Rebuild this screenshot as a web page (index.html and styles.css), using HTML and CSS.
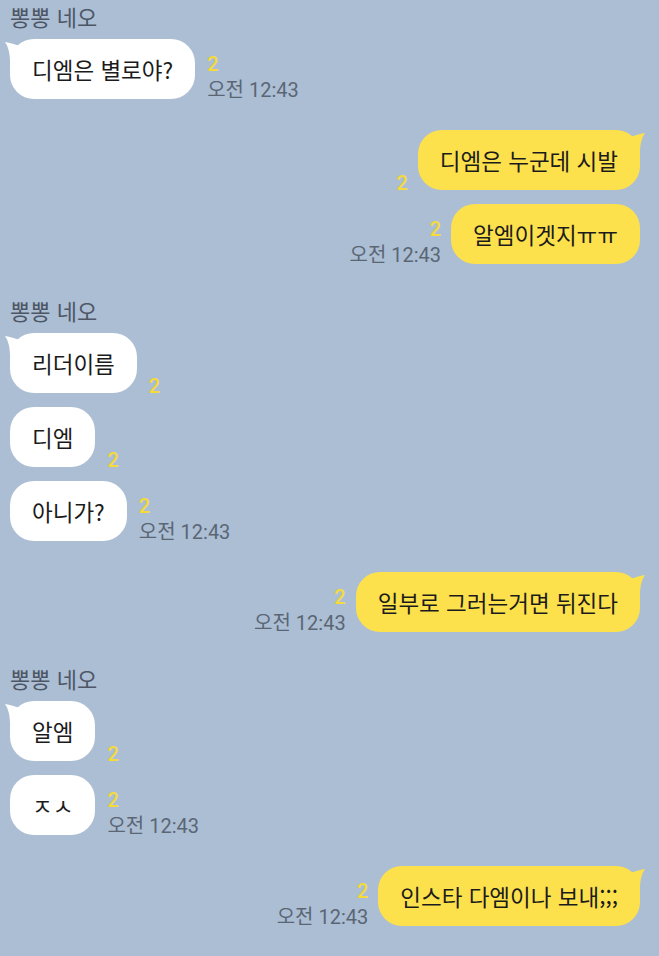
FILE: index.html
```html
<!DOCTYPE html>
<html lang="ko">
<head>
<meta charset="utf-8">
<title>채팅</title>
<link rel="stylesheet" href="styles.css">
</head>
<body>
<div class="chat">
  <div class="group in">
    <div class="name">뽕뽕 네오</div>
    <div class="row">
      <div class="bubble white first">디엠은 별로야?<svg class="tail" width="20" height="24" viewBox="0 0 20 24"><path d="M0 2 C5 3 10 4.5 16 6 L16 22 L5 22 C5 14 3.5 7 0 2 Z" fill="#fff"/></svg></div>
      <div class="meta"><span class="unread">2</span><span class="time">오전 12:43</span></div>
    </div>
  </div>

  <div class="group out">
    <div class="row">
      <div class="meta solo"><span class="unread">2</span></div>
      <div class="bubble yellow first">디엠은 누군데 시발<svg class="tail" width="20" height="24" viewBox="0 0 20 24"><path d="M20 2 C15 3 10 4.5 4 6 L4 22 L15 22 C15 14 16.5 7 20 2 Z" fill="#fde14c"/></svg></div>
    </div>
    <div class="row">
      <div class="meta"><span class="unread">2</span><span class="time">오전 12:43</span></div>
      <div class="bubble yellow">알엠이겟지ㅠㅠ</div>
    </div>
  </div>

  <div class="group in">
    <div class="name">뽕뽕 네오</div>
    <div class="row">
      <div class="bubble white first">리더이름<svg class="tail" width="20" height="24" viewBox="0 0 20 24"><path d="M0 2 C5 3 10 4.5 16 6 L16 22 L5 22 C5 14 3.5 7 0 2 Z" fill="#fff"/></svg></div>
      <div class="meta solo"><span class="unread">2</span></div>
    </div>
    <div class="row">
      <div class="bubble white">디엠</div>
      <div class="meta solo"><span class="unread">2</span></div>
    </div>
    <div class="row">
      <div class="bubble white">아니가?</div>
      <div class="meta"><span class="unread">2</span><span class="time">오전 12:43</span></div>
    </div>
  </div>

  <div class="group out">
    <div class="row">
      <div class="meta"><span class="unread">2</span><span class="time">오전 12:43</span></div>
      <div class="bubble yellow first">일부로 그러는거면 뒤진다<svg class="tail" width="20" height="24" viewBox="0 0 20 24"><path d="M20 2 C15 3 10 4.5 4 6 L4 22 L15 22 C15 14 16.5 7 20 2 Z" fill="#fde14c"/></svg></div>
    </div>
  </div>

  <div class="group in">
    <div class="name">뽕뽕 네오</div>
    <div class="row">
      <div class="bubble white first">알엠<svg class="tail" width="20" height="24" viewBox="0 0 20 24"><path d="M0 2 C5 3 10 4.5 16 6 L16 22 L5 22 C5 14 3.5 7 0 2 Z" fill="#fff"/></svg></div>
      <div class="meta solo"><span class="unread">2</span></div>
    </div>
    <div class="row">
      <div class="bubble white">ㅈㅅ</div>
      <div class="meta"><span class="unread">2</span><span class="time">오전 12:43</span></div>
    </div>
  </div>

  <div class="group out">
    <div class="row">
      <div class="meta"><span class="unread">2</span><span class="time">오전 12:43</span></div>
      <div class="bubble yellow first">인스타 다엠이나 보내;;;<svg class="tail" width="20" height="24" viewBox="0 0 20 24"><path d="M20 2 C15 3 10 4.5 4 6 L4 22 L15 22 C15 14 16.5 7 20 2 Z" fill="#fde14c"/></svg></div>
    </div>
  </div>
</div>
</body>
</html>
```

FILE: styles.css
```css
html, body {
  margin: 0;
  padding: 0;
}
body {
  background: #abbed4;
  font-family: "Noto Sans CJK KR", "Noto Sans", sans-serif;
  width: 659px;
  height: 956px;
  overflow: hidden;
}
.chat {
  display: flex;
  flex-direction: column;
  gap: 30.5px;
  padding: 0 19px 0 10px;
}
.group {
  display: flex;
  flex-direction: column;
}
.group.in { align-items: flex-start; }
.group.out { align-items: flex-end; }
.name {
  font-size: 22px;
  line-height: 32px;
  margin-bottom: 7px;
  color: #4d5664;
}
.row {
  display: flex;
  align-items: flex-end;
}
.row + .row { margin-top: 14px; }
.group.in .row { gap: 12px; }
.group.out .row { gap: 10px; }
.bubble {
  position: relative;
  height: 60px;
  box-sizing: border-box;
  padding: 0 22px;
  border-radius: 24px;
  display: flex;
  align-items: center;
  font-size: 22.5px;
  color: #1b1b1b;
  white-space: nowrap;
}
.bubble.white { background: #ffffff; }
.bubble.yellow { background: #fde14c; }
.tail {
  position: absolute;
  top: 1px;
}
.white .tail { left: -5px; }
.yellow .tail { right: -5px; }
.meta {
  display: flex;
  flex-direction: column;
  font-size: 20px;
  line-height: 26px;
  margin-bottom: -4px;
  white-space: nowrap;
}
.meta.solo { margin-bottom: -6px; }
.group.out .meta { align-items: flex-end; }
.group.in .meta { align-items: flex-start; }
.unread {
  font-family: Roboto, "Noto Sans CJK KR", sans-serif;
  font-weight: 500;
  color: #f5da38;
}
.time {
  font-family: Roboto, "Noto Sans CJK KR", sans-serif;
  color: #5b6674;
}
```
